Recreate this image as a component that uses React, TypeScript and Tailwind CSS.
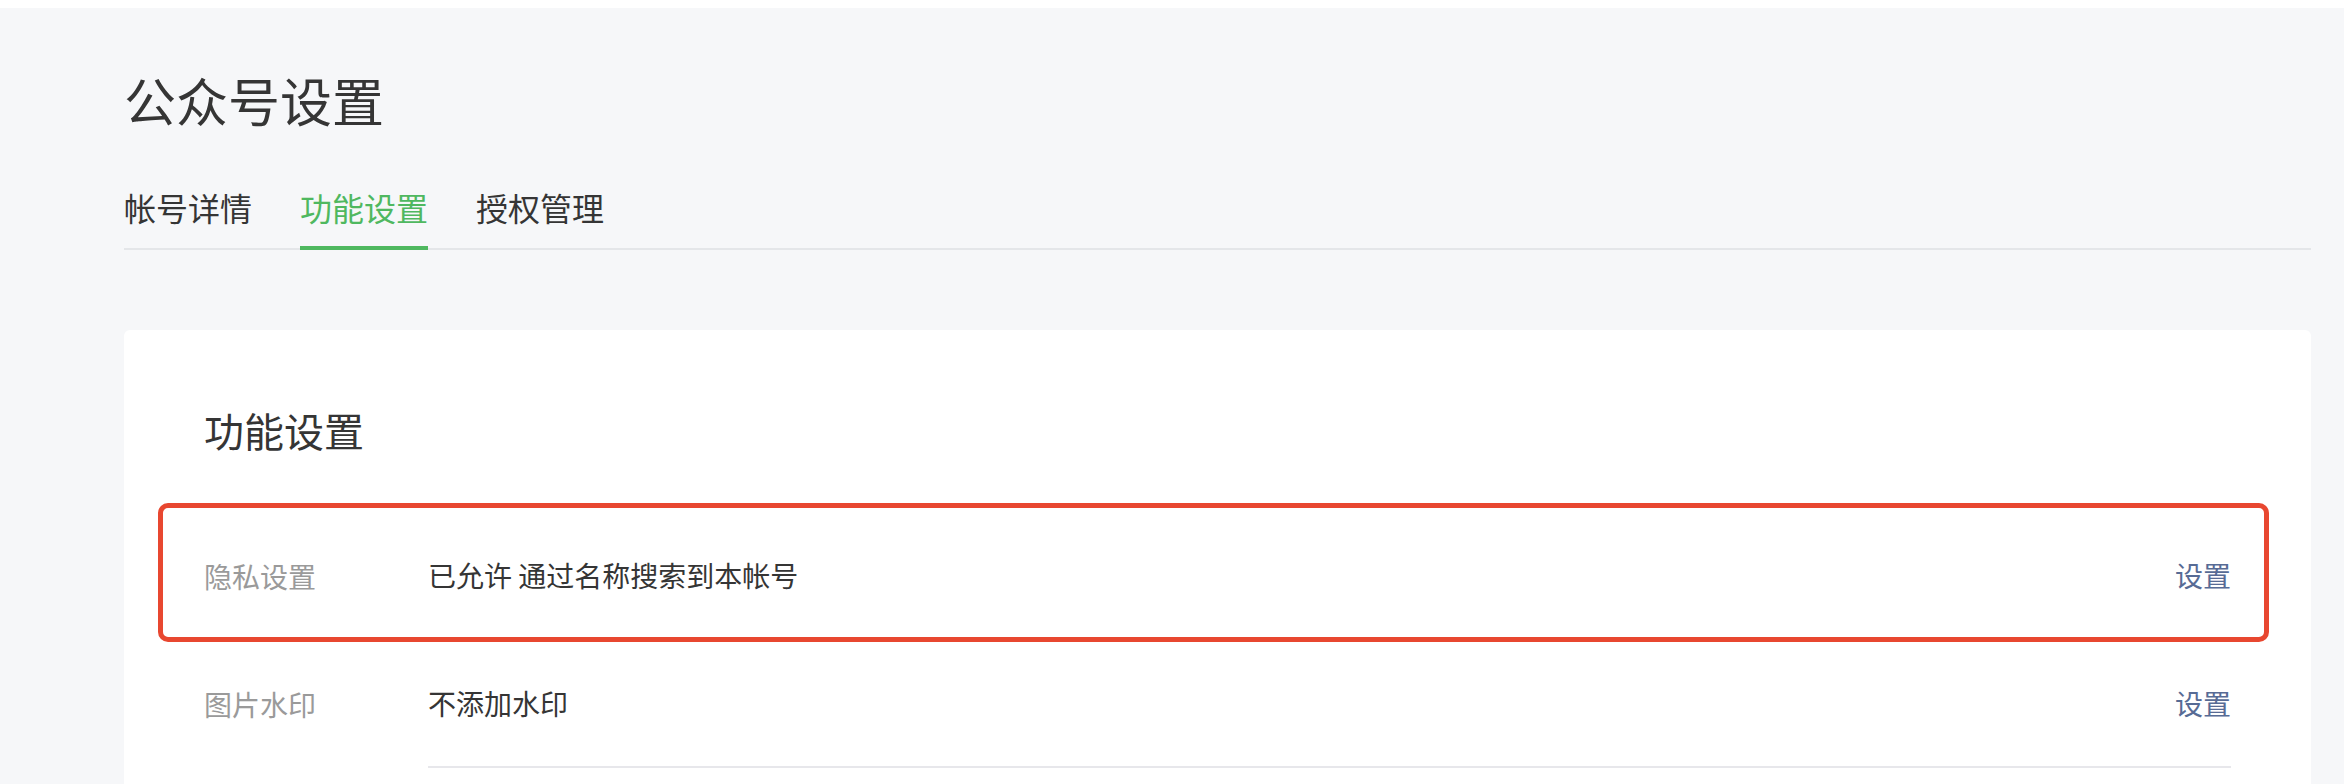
import React from "react";

// 公众号设置 - 功能设置 page

const FONT = '"Noto Sans CJK SC", "Noto Sans", sans-serif';

const TABS = [
  { key: "detail", label: "帐号详情" },
  { key: "feature", label: "功能设置" },
  { key: "auth", label: "授权管理" },
];

const ROWS = [
  { label: "隐私设置", value: "已允许 通过名称搜索到本帐号", highlight: true },
  { label: "图片水印", value: "不添加水印", highlight: false },
];

function SettingRow({ label, value, highlight }: { label: string; value: string; highlight: boolean }) {
  return (
    <div className="relative flex">
      {/* annotation box */}
      {highlight && (
        <div className="pointer-events-none absolute -left-[46px] -right-[38px] -top-[9px] -bottom-[2px] rounded-[10px] border-[5px] border-[#e84730]" />
      )}
      <div className="flex h-[128px] w-[224px] shrink-0 items-center text-[28px] leading-[40px] text-[#9a9a9a]">
        {label}
      </div>
      <div className="flex h-[128px] flex-1 items-center justify-between border-b-2 border-[#e7e7eb]">
        <span className="text-[28px] leading-[40px] text-[#353535]">{value}</span>
        <a className="cursor-pointer text-[28px] leading-[40px] text-[#576b95]">设置</a>
      </div>
    </div>
  );
}

export default function App() {
  const active = "feature";

  return (
    <div className="min-h-[784px] bg-white pt-[8px]" style={{ fontFamily: FONT }}>
      <div className="min-h-[776px] bg-[#f6f7f9] pl-[124px] pr-[33px] pt-[56px]">
        {/* Page title */}
        <h1 className="text-[52px] font-normal leading-[72px] text-[#353535]">公众号设置</h1>

        {/* Tabs */}
        <div className="mt-[47px] flex gap-[48px] border-b-2 border-[#e4e6e9]">
          {TABS.map((tab) => (
            <div
              key={tab.key}
              className={
                tab.key === active
                  ? "-mb-[2px] border-b-4 border-[#4fb860] pb-[15px] text-[32px] leading-[48px] text-[#4fb860]"
                  : "-mb-[2px] border-b-4 border-transparent pb-[15px] text-[32px] leading-[48px] text-[#353535]"
              }
            >
              {tab.label}
            </div>
          ))}
        </div>

        {/* Card */}
        <div className="mt-[80px] rounded-[6px] bg-white px-[80px] pb-[40px] pt-[70px]">
          <h2 className="mb-[52px] text-[40px] font-normal leading-[60px] text-[#353535]">功能设置</h2>
          {ROWS.map((row) => (
            <SettingRow key={row.label} {...row} />
          ))}
        </div>
      </div>
    </div>
  );
}
